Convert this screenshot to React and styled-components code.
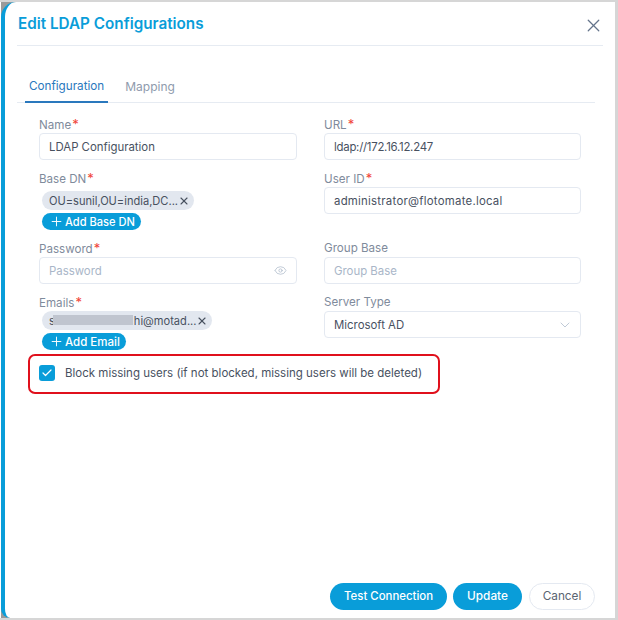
import React from "react";
import styled, { createGlobalStyle } from "styled-components";
import { X, Plus, Eye, ChevronDown, Check } from "lucide-react";

const Global = createGlobalStyle`
  html, body { margin: 0; padding: 0; background: #fff; }
  body { font-family: "Inter", "Open Sans", sans-serif; width: 618px; height: 620px; overflow: hidden; }
  * { box-sizing: border-box; }
`;
const Frame = styled.div`
  width: 618px; height: 620px; background: #fff;
  border-top: 2px solid #d6d6d6; border-right: 3px solid #d6d6d6; border-bottom: 2px solid #d6d6d6;
  padding-left: 1px;
`;
const Sheet = styled.div`height: 100%; background: #9a9a9a;`;
const Modal = styled.div`
  height: 100%; display: flex; flex-direction: column;
  border-left: 4px solid #099dd9; border-top-left-radius: 15px; border-bottom-left-radius: 9px; background: #fff;
  padding: 0 12px 8px 12px;
`;
const Header = styled.header`
  height: 44px; flex: none; display: flex; align-items: center; justify-content: space-between;
  border-bottom: 1px solid #e6ebf2; padding: 0 2px 0 1px;
`;
const Title = styled.h1`
  margin: 0; font-size: 15.25px; line-height: 20px; font-weight: 600; color: #099dd9;
`;
const Close = styled.span`display: flex; color: #64748b; margin-right: -3px; position: relative; top: 2px;`;
const Tabs = styled.nav`
  margin-top: 28px; margin-right: 8px; height: 29px; display: flex; flex: none;
  border-bottom: 1px solid #e6ebf2; padding-left: 8px;
`;
const Tab = styled.div`
  height: 29px; padding: 0 4px; margin-right: 13px; font-size: ${p => (p.$active ? 11.7 : 12)}px; line-height: 25px;
  color: ${p => (p.$active ? "#2a78bd" : "#8f9bad")};
  border-bottom: ${p => (p.$active ? "2px solid #2a78bd" : "0")};
`;
const Form = styled.div`
  margin: 13px 0 0 22px; width: 542px; display: grid; grid-template-columns: 258px 257px; column-gap: 27px; align-content: start;
`;
const Column = styled.div`display: flex; flex-direction: column;`;
const Field = styled.div`display: flex; flex-direction: column; height: ${p => p.$h}px;`;
const Label = styled.label`
  flex: none; height: 17px; font-size: 11.6px; line-height: 16px; color: #7f8b9c; display: block;
  & > b { color: #f04438; font-weight: 400; font-size: 13px; margin-left: 1px; }
`;
const Input = styled.div`
  flex: none; height: 27px; border: 1px solid #e4e9f1; border-radius: 4px; padding: 0 9px;
  display: flex; align-items: center; justify-content: space-between;
  font-size: 11.4px; letter-spacing: ${p => p.$track || 0}px; color: ${p => (p.$placeholder ? "#a9b6c8" : "#48515f")};
  & svg { color: #a9b6c8; }
`;
const Chip = styled.div`
  flex: none; position: relative; align-self: flex-start; margin: ${p => p.$mt}px 0 0 3px; height: 19px; border-radius: 10px; background: #e2e7ef;
  padding: 0 4px 0 7px; display: flex; align-items: center; font-size: 11.1px; color: #48515f; white-space: nowrap;
`;
const Redact = styled.span`
  position: absolute; left: 11px; top: 4px; width: 80px; height: 10px; background: #c0c5cf;
`;
const EmailTail = styled.span`margin-left: 79px;`;
const AddButton = styled.div`
  flex: none; align-self: flex-start; margin: 3px 0 0 3px; height: 17px; border-radius: 9px; background: #099dd9; color: #fff;
  padding: 0 6px 0 7px; display: flex; align-items: center; gap: 1px; font-size: ${p => p.$size}px; font-weight: 500; white-space: nowrap;
`;
const CheckRow = styled.div`
  position: relative; margin: 6px 0 0 22px; height: 40px; padding-bottom: 3px; display: flex; align-items: center; gap: 10px;
  font-size: 11.5px; color: #48515f; flex: none; white-space: nowrap;
`;
const Box = styled.span`
  width: 16px; height: 16px; border-radius: 3px; background: #099dd9; color: #fff; display: flex; align-items: center; justify-content: center;
`;
const Highlight = styled.div`
  position: absolute; left: -11px; top: 0; width: 412px; height: 40px; border: 2px solid #e0101c; border-radius: 7px; pointer-events: none;
`;
const Footer = styled.footer`
  margin-top: auto; margin-right: 8px; display: flex; justify-content: flex-end; gap: 6px; flex: none;
`;
const Button = styled.div`
  height: 27px; padding-bottom: 1px; border-radius: 14px; display: flex; align-items: center; justify-content: center; font-size: ${p => p.$size}px;
  width: ${p => p.$w}px; margin-left: ${p => p.$ml || 0}px;
  background: ${p => (p.$ghost ? "#fff" : "#099dd9")}; color: ${p => (p.$ghost ? "#5a6472" : "#fff")};
  border: ${p => (p.$ghost ? "1px solid #e4e9f1" : "0")}; font-weight: ${p => (p.$ghost ? 400 : 500)};
`;
const Req = () => <b>*</b>;

export default function App() {
  return (
    <>
      <Global />
      <Frame>
        <Sheet>
          <Modal>
            <Header>
              <Title>Edit LDAP Configurations</Title>
              <Close><X size={21} strokeWidth={1.4} /></Close>
            </Header>
            <Tabs>
              <Tab $active>Configuration</Tab>
              <Tab>Mapping</Tab>
            </Tabs>
            <Form>
              <Column>
                <Field $h={54}>
                  <Label>Name<Req /></Label>
                  <Input>LDAP Configuration</Input>
                </Field>
                <Field $h={70}>
                  <Label>Base DN<Req /></Label>
                  <Chip $mt={4}>OU=sunil,OU=india,DC...<X size={12} strokeWidth={2.2} /></Chip>
                  <AddButton $size={11.1}><Plus size={15} strokeWidth={1.5} />Add Base DN</AddButton>
                </Field>
                <Field $h={54}>
                  <Label>Password<Req /></Label>
                  <Input $placeholder>Password<Eye size={13} strokeWidth={1.3} /></Input>
                </Field>
                <Field $h={54}>
                  <Label>Emails<Req /></Label>
                  <Chip $mt={0}>s<Redact /><EmailTail>hi@motad...</EmailTail><X size={12} strokeWidth={2.2} /></Chip>
                  <AddButton $size={11.5}><Plus size={15} strokeWidth={1.5} />Add Email</AddButton>
                </Field>
              </Column>
              <Column>
                <Field $h={54}>
                  <Label>URL<Req /></Label>
                  <Input $track={-0.25}>ldap://172.16.12.247</Input>
                </Field>
                <Field $h={70}>
                  <Label>User ID<Req /></Label>
                  <Input $track={0.25}>administrator@flotomate.local</Input>
                </Field>
                <Field $h={54}>
                  <Label>Group Base</Label>
                  <Input $placeholder>Group Base</Input>
                </Field>
                <Field $h={54}>
                  <Label>Server Type</Label>
                  <Input>Microsoft AD<ChevronDown size={16} strokeWidth={1.1} style={{ marginRight: -2 }} /></Input>
                </Field>
              </Column>
            </Form>
            <CheckRow>
              <Highlight />
              <Box><Check size={12} strokeWidth={2.4} /></Box>
              Block missing users (if not blocked, missing users will be deleted)
            </CheckRow>
            <Footer>
              <Button $w={117} $size={11.4}>Test Connection</Button>
              <Button $w={69} $size={11.8}>Update</Button>
              <Button $w={66} $ml={1} $size={11.8} $ghost>Cancel</Button>
            </Footer>
          </Modal>
        </Sheet>
      </Frame>
    </>
  );
}
